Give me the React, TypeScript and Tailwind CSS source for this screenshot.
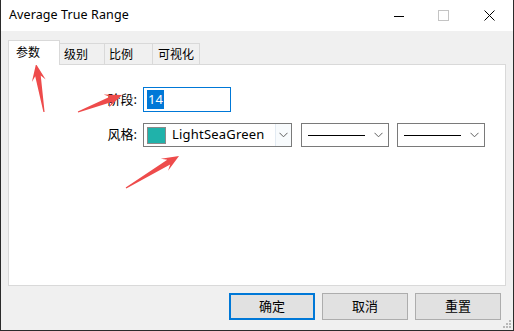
import React from "react";

type Pt = [number, number];

// tapered annotation arrow, tail -> tip
const arrowPoints = (tail: Pt, tip: Pt) => {
  const [tx, ty] = tail;
  const [px, py] = tip;
  const len = Math.hypot(px - tx, py - ty);
  const ux = (px - tx) / len;
  const uy = (py - ty) / len;
  const nx = -uy;
  const ny = ux;
  const headLen = 17;
  const bx = px - ux * headLen;
  const by = py - uy * headLen;
  const nbx = px - ux * (headLen - 5);
  const nby = py - uy * (headLen - 5);
  const p = (x: number, y: number, w: number) => `${x + nx * w},${y + ny * w}`;
  return [
    p(tx, ty, 0.6),
    p(nbx, nby, 2.8),
    p(bx, by, 7),
    `${px},${py}`,
    p(bx, by, -7),
    p(nbx, nby, -2.8),
    p(tx, ty, -0.6),
  ].join(" ");
};

const Chevron = () => (
  <svg width="9" height="6" viewBox="0 0 9 6" className="text-[#606060]">
    <path d="M0.5 0.8 L4.5 4.8 L8.5 0.8" fill="none" stroke="currentColor" strokeWidth="1" />
  </svg>
);

const LineCombo = () => (
  <div className="w-[88px] h-[24px] border border-[#7a7a7a] bg-white flex items-center pl-[6px] pr-[5px]">
    <div className="w-[57px] h-px bg-black" />
    <div className="flex-1" />
    <Chevron />
  </div>
);

const tabs = ["级别", "比例", "可视化"];

export default function App() {
  return (
    <div
      className="relative w-[514px] h-[331px] overflow-hidden bg-[#f0f0f0] border-l border-r border-b border-[#2b2b2b] flex flex-col text-[12px] text-black"
      style={{ fontFamily: '"Noto Sans", "Noto Sans CJK SC", sans-serif' }}
    >
      {/* title bar */}
      <div className="h-[31px] bg-white flex items-center shrink-0">
        <span className="ml-[8px] text-[12.5px] tracking-[0.1px]">Average True Range</span>
        <div className="flex-1" />
        <svg width="10" height="10" viewBox="0 0 10 10" className="mr-[34px]">
          <path d="M0 5.5 H10" stroke="#000" strokeWidth="1" />
        </svg>
        <svg width="11" height="11" viewBox="0 0 11 11" className="mr-[35px]">
          <rect x="0.5" y="0.5" width="10" height="10" fill="none" stroke="#c4c4c4" strokeWidth="1" />
        </svg>
        <svg width="11" height="11" viewBox="0 0 11 11" className="mr-[18px]">
          <path d="M0.5 0.5 L10.5 10.5 M10.5 0.5 L0.5 10.5" stroke="#000" strokeWidth="1" />
        </svg>
      </div>

      {/* tabs */}
      <div className="mt-[9px] ml-[7px] flex items-end h-[24px]">
        <div className="relative z-10 -mb-px h-[25px] w-[52px] bg-white border border-b-0 border-[#d9d9d9] pl-[7px] pt-[3px]">
          参数
        </div>
        {tabs.map((t, i) => (
          <div
            key={t}
            className={`h-[21px] border-t border-r border-[#d9d9d9] bg-[#f0f0f0] pl-[4px] leading-[21px] ${
              i === 0 ? "w-[45px]" : i === 1 ? "w-[48px]" : "w-[47px] pl-[5px]"
            }`}
          >
            {t}
          </div>
        ))}
      </div>

      {/* panel */}
      <div className="ml-[7px] w-[498px] h-[222px] bg-white border border-[#d9d9d9] pt-[22px] flex flex-col gap-[11px]">
        <div className="flex items-center">
          <span className="w-[128px] text-right text-[13px]">阶段:</span>
          <div className="ml-[6px] w-[88px] h-[25px] border border-[#0078d7] flex items-center pl-[3px]">
            <span className="bg-[#0078d7] text-white text-[13px] leading-[19px] px-px">14</span>
          </div>
        </div>
        <div className="flex items-center">
          <span className="w-[128px] text-right text-[13px]">风格:</span>
          <div className="ml-[6px] w-[149px] h-[24px] border border-[#7a7a7a] bg-white flex items-center">
            <div className="ml-[3px] w-[19px] h-[17px] bg-[#20b2aa] border border-[#8a8a8a]" />
            <span className="ml-[6px] text-[13px] tracking-[0.2px]">LightSeaGreen</span>
            <div className="flex-1" />
            <div className="w-[16px] h-full border-l border-[#e3ebf3] bg-[#f8fbfd] flex items-center justify-center">
              <Chevron />
            </div>
          </div>
          <div className="ml-[9px]">
            <LineCombo />
          </div>
          <div className="ml-[8px]">
            <LineCombo />
          </div>
        </div>
      </div>

      {/* buttons */}
      <div className="mt-[7px] flex justify-end gap-[7px] pr-[12px]">
        <button className="w-[86px] h-[27px] bg-[#e1e1e1] border-2 border-[#0078d7] text-[13px]">确定</button>
        <button className="w-[86px] h-[27px] bg-[#e1e1e1] border border-[#adadad] text-[13px]">取消</button>
        <button className="w-[86px] h-[27px] bg-[#e1e1e1] border border-[#adadad] text-[13px]">重置</button>
      </div>

      {/* size grip */}
      <svg width="8" height="8" viewBox="0 0 8 8" className="absolute right-[2px] bottom-[2px]">
        {[
          [6, 0],
          [6, 3],
          [3, 3],
          [6, 6],
          [3, 6],
          [0, 6],
        ].map(([x, y]) => (
          <rect key={`${x}-${y}`} x={x} y={y} width="2" height="2" fill="#b8b8b8" />
        ))}
      </svg>

      {/* red annotation arrows */}
      <svg width="514" height="331" className="absolute left-[-1px] top-0 pointer-events-none">
        <polygon points={arrowPoints([44, 112], [36, 64])} fill="#ee4b4b" />
        <polygon points={arrowPoints([78, 112], [122, 95])} fill="#ee4b4b" />
        <polygon points={arrowPoints([126, 188], [179, 156])} fill="#ee4b4b" />
      </svg>
    </div>
  );
}
